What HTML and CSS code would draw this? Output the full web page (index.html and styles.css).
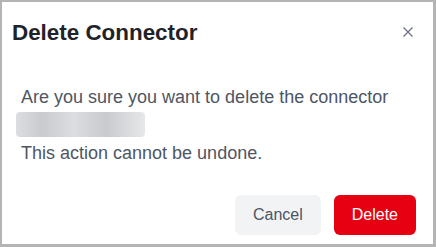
FILE: index.html
```html
<!DOCTYPE html>
<html>
<head>
<meta charset="utf-8">
<link rel="stylesheet" href="styles.css">
</head>
<body>
<div class="dialog">
  <div class="header">
    <h2 class="title">Delete Connector</h2>
    <button class="close" aria-label="Close">
      <svg width="10" height="10" viewBox="0 0 10 10"><path d="M0.5 0.5 L9.5 9.5 M9.5 0.5 L0.5 9.5" stroke="#6b7280" stroke-width="1.3" fill="none"/></svg>
    </button>
  </div>
  <div class="body">
    <p class="line">Are you sure you want to delete the connector</p>
    <div class="redacted"></div>
    <p class="line">This action cannot be undone.</p>
  </div>
  <div class="footer">
    <button class="btn btn-cancel">Cancel</button>
    <button class="btn btn-delete">Delete</button>
  </div>
</div>
</body>
</html>
```
FILE: styles.css
```css
html, body {
  margin: 0;
  padding: 0;
  background: #ffffff;
}
.dialog {
  box-sizing: border-box;
  width: 436px;
  height: 247px;
  border-style: solid;
  border-color: #b4b4b4;
  border-width: 2px 3px 3px 2px;
  background: #ffffff;
  font-family: "Liberation Sans", Arial, sans-serif;
  display: flex;
  flex-direction: column;
}
.header {
  display: flex;
  align-items: flex-start;
  justify-content: space-between;
  padding: 17px 20px 0 10px;
}
.title {
  margin: 0;
  font-size: 22.4px;
  line-height: 28px;
  font-weight: 700;
  color: #1f2329;
}
.close {
  border: 0;
  background: none;
  padding: 0;
  margin-top: 8px;
  width: 10px;
  height: 10px;
  display: flex;
}
.body {
  padding: 38px 0 0 19px;
}
.line {
  margin: 0;
  font-size: 18px;
  line-height: 24px;
  color: #4e5663;
}
.redacted {
  width: 129px;
  height: 25px;
  margin: 3px 0 4px -5px;
  border-radius: 4px;
  background: linear-gradient(90deg, #dcdde0 0%, #c9cbcf 20%, #dcdde0 45%, #c8cacd 70%, #e7e8ea 100%);
  filter: blur(0.6px);
}
.footer {
  display: flex;
  justify-content: flex-end;
  gap: 13px;
  padding: 30px 17px 0 0;
}
.btn {
  height: 40px;
  padding: 0 18px;
  border: 0;
  border-radius: 6px;
  font-family: "Liberation Sans", Arial, sans-serif;
  font-size: 16px;
}
.btn-cancel {
  background: #f2f3f5;
  color: #4b5563;
}
.btn-delete {
  background: #e60012;
  color: #ffffff;
}
```
